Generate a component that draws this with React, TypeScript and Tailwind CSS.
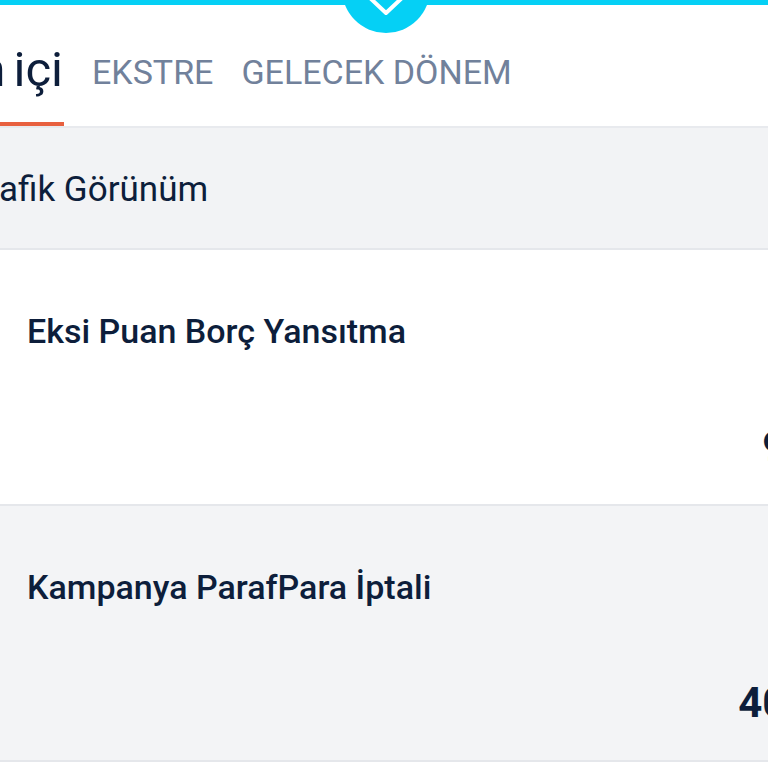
/** Dönem içi işlemler — tabs + transaction list (cropped, zoomed view). */

const font = { fontFamily: 'Roboto, "Noto Sans", sans-serif' }

interface Transaction {
  id: number
  title: string
  amount: string
}

const transactions: Transaction[] = [
  { id: 1, title: 'Eksi Puan Borç Yansıtma', amount: '9,18 TL' },
  { id: 2, title: 'Kampanya ParafPara İptali', amount: '40,00 TL' },
]

function TopHandle() {
  return (
    <div className="relative h-[5px] bg-[#05d0f5]">
      <div className="absolute left-[342px] top-[-55px] flex h-[88px] w-[88px] items-end justify-center rounded-full bg-[#05d0f5] pb-[17px]">
        <svg width="38" height="22" viewBox="0 0 38 22" fill="none">
          <path d="M2 3 L19 19 L36 3" stroke="white" strokeWidth="4" strokeLinecap="round" strokeLinejoin="round" />
        </svg>
      </div>
    </div>
  )
}

function Tabs() {
  return (
    <div className="flex h-[123px] items-stretch gap-[28px] border-b-2 border-[#e8eaee] bg-white">
      <div className="flex w-[64px] shrink-0 justify-end">
        <div className="flex flex-col justify-end whitespace-nowrap border-b-4 border-[#e8603f] pb-[28px] pl-2 pr-[1px] text-[49px] leading-none text-[#0d1e3b] [word-spacing:-4px]">
          Dönem içi
        </div>
      </div>
      <div className="flex flex-col justify-end whitespace-nowrap pb-[37px] text-[34px] leading-none text-[#71819b]">
        EKSTRE
      </div>
      <div className="flex flex-col justify-end whitespace-nowrap pb-[37px] text-[34px] leading-none text-[#71819b]">
        GELECEK DÖNEM
      </div>
    </div>
  )
}

function TransactionRow({ tx, shaded }: { tx: Transaction; shaded: boolean }) {
  return (
    <div
      className={`flex h-[256px] flex-col border-b-2 border-[#e5e7eb] px-[27px] pt-[64px] ${
        shaded ? 'bg-[#f3f4f6]' : 'bg-white'
      }`}
    >
      <div className="whitespace-nowrap text-[34px] font-medium leading-none text-[#0d1e3b]">{tx.title}</div>
      <div className="mt-[78px] flex justify-end whitespace-nowrap text-[42px] font-bold leading-none text-[#0d1e3b]">
        {tx.amount}
      </div>
    </div>
  )
}

export default function App() {
  return (
    <div className="h-[768px] w-full overflow-hidden bg-white" style={font}>
      <div className="w-[930px]">
        <TopHandle />
        <Tabs />
        <div className="flex h-[122px] items-center border-b-2 border-[#e5e7eb] bg-[#f2f3f5]">
          <span className="-ml-[36px] mt-[3px] whitespace-nowrap text-[35px] leading-none text-[#0d1e3b]">Grafik Görünüm</span>
        </div>
        {transactions.map((tx, i) => (
          <TransactionRow key={tx.id} tx={tx} shaded={i % 2 === 1} />
        ))}
      </div>
    </div>
  )
}
